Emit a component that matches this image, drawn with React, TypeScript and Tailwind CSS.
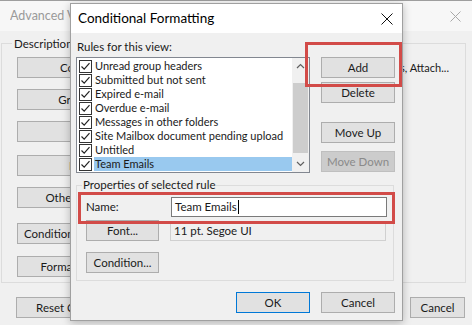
import React from "react";

const font = "font-['Lato','Segoe_UI',sans-serif]";

function Btn({ children, className = "", disabled = false }: { children: React.ReactNode; className?: string; disabled?: boolean }) {
  return (
    <div
      className={`h-[21px] shrink-0 flex items-center justify-center whitespace-nowrap border text-[11.5px] ${
        disabled ? "bg-[#cccccc] border-[#bfbfbf] text-[#8a8a8a]" : "bg-[#e1e1e1] border-[#adadad] text-[#1a1a1a]"
      } ${className}`}
    >
      {children}
    </div>
  );
}

function Check() {
  return (
    <span className="w-[13px] h-[13px] border border-[#333] bg-white flex items-center justify-center shrink-0">
      <svg width="11" height="11" viewBox="0 0 11 11">
        <path d="M1.5 5.5 L4.2 8.2 L9.5 2.2" fill="none" stroke="#222" strokeWidth="1.2" />
      </svg>
    </span>
  );
}

const rules = [
  "Unread group headers",
  "Submitted but not sent",
  "Expired e-mail",
  "Overdue e-mail",
  "Messages in other folders",
  "Site Mailbox document pending upload",
  "Untitled",
  "Team Emails",
];

export default function App() {
  return (
    <div className={`relative w-[472px] h-[325px] overflow-hidden bg-[#f0f0f0] ${font} text-[#1a1a1a]`}>
      {/* background window: Advanced View Settings */}
      <div className="h-[31px] bg-[#f7f7f7] border-t border-[#9e9e9e] flex items-center justify-between pl-[10px] pr-[11px]">
        <span className="w-[60px] overflow-hidden whitespace-nowrap text-[12.5px] text-[#9a9a9a]">Advanced View Settings</span>
        <svg width="11" height="11" viewBox="0 0 11 11">
          <path d="M0.5 0.5 L10.5 10.5 M10.5 0.5 L0.5 10.5" stroke="#a8a8a8" strokeWidth="1" />
        </svg>
      </div>
      <div className="relative mx-[1px] mt-[12px] h-[240px] w-[465px] border border-[#dcdcdc] flex">
        <span className="absolute -top-[9px] left-[10px] bg-[#f0f0f0] px-[2px] text-[11.5px]">Description</span>
        <div className="flex flex-col ml-[15px] pt-[13px] w-[53px] overflow-hidden">
          <Btn className="w-[138px]">Columns...</Btn>
          <Btn className="w-[138px] mt-[11px]">Group By...</Btn>
          <Btn className="w-[138px] mt-[11px]">Sort...</Btn>
          <Btn className="w-[138px] mt-[13px]">Filter...</Btn>
          <Btn className="w-[138px] mt-[11px]">Other Settings...</Btn>
          <Btn className="w-[138px] mt-[15px]">Conditional Formatting...</Btn>
          <Btn className="w-[138px] mt-[12px]">Format Columns...</Btn>
        </div>
        <div className="ml-auto mt-[16px] mr-[16px] w-[55px] h-[16px] overflow-hidden flex justify-end">
          <span className="whitespace-nowrap text-[11px]">Flag Status, Attach...</span>
        </div>
      </div>
      <div className="flex justify-between pl-[16px] pr-[7px] mt-[14px]">
        <div className="w-[54px] overflow-hidden">
          <Btn className="w-[138px]">Reset Current View</Btn>
        </div>
        <Btn className="w-[55px]">Cancel</Btn>
      </div>

      {/* front dialog: Conditional Formatting */}
      <div className="absolute left-[70px] top-[3px] w-[333px] h-[318px] border border-[#a0a0a0] bg-[#f0f0f0] shadow-[0_2px_8px_rgba(0,0,0,0.25)] flex flex-col">
        <div className="h-[29px] bg-white flex items-center justify-between pl-[7px] pr-[9px]">
          <span className="text-[13.5px] text-black">Conditional Formatting</span>
          <svg width="12" height="12" viewBox="0 0 12 12">
            <path d="M0.5 0.5 L11.5 11.5 M11.5 0.5 L0.5 11.5" stroke="#111" strokeWidth="1" />
          </svg>
        </div>
        <div className="flex pl-[5px] pt-[6px]">
          <div className="w-[234px]">
            <div className="text-[11.5px] leading-[16px] pl-[1px]">Rules for this view:</div>
            <div className="mt-[2px] h-[116px] border border-[#828790] bg-white flex">
              <div className="flex-1 pt-[1px] pl-[2px]">
                {rules.map((r, i) => (
                  <div key={r} className="h-[14px] flex items-center">
                    <Check />
                    <span
                      className={`ml-[2px] h-[14px] flex items-center whitespace-nowrap text-[11px] leading-[14px] pl-[1px] ${
                        i === rules.length - 1 ? "bg-[#99c9ef] flex-1" : ""
                      }`}
                    >
                      {r}
                    </span>
                  </div>
                ))}
              </div>
              <div className="w-[17px] bg-[#f0f0f0] flex flex-col items-center">
                <svg width="17" height="17" viewBox="0 0 17 17">
                  <path d="M5 10 L8.5 6.5 L12 10" fill="none" stroke="#606060" strokeWidth="1.2" />
                </svg>
                <div className="w-[15px] h-[70px] mt-[8px] bg-[#cdcdcd]" />
                <div className="flex-1" />
                <svg width="17" height="17" viewBox="0 0 17 17">
                  <path d="M5 7 L8.5 10.5 L12 7" fill="none" stroke="#606060" strokeWidth="1.2" />
                </svg>
              </div>
            </div>
          </div>
          <div className="ml-[11px] pt-[18px] flex flex-col">
            <Btn className="w-[74px]">Add</Btn>
            <Btn className="w-[74px] mt-[4px]">Delete</Btn>
            <Btn className="w-[74px] mt-[19px]">Move Up</Btn>
            <Btn className="w-[74px] mt-[8px]" disabled>
              Move Down
            </Btn>
          </div>
        </div>

        {/* properties group */}
        <div className="relative ml-[5px] mt-[12px] w-[318px] h-[96px] border border-[#dcdcdc] pl-[9px] pt-[11px]">
          <span className="absolute -top-[9px] left-[5px] px-[1px] bg-[#f0f0f0] text-[11.5px] leading-[16px]">Properties of selected rule</span>
          <div className="flex items-center">
            <span className="w-[85px] text-[11.5px]">Name:</span>
            <div className="w-[216px] h-[20px] bg-white border border-[#7a7a7a] flex items-center pl-[3px] text-[11.5px]">
              Team Emails<span className="w-px h-[14px] bg-black ml-[1px]" />
            </div>
          </div>
          <div className="flex items-center mt-[3px]">
            <Btn className="w-[73px]">Font...</Btn>
            <div className="ml-[11px] w-[216px] h-[20px] border border-[#d0d0d0] flex items-center pl-[3px] text-[11.5px]">
              11 pt. Segoe UI
            </div>
          </div>
          <Btn className="w-[73px] mt-[11px]">Condition...</Btn>
        </div>

        <div className="flex justify-end gap-[11px] pr-[7px] mt-[11px]">
          <Btn className="w-[74px] !border-[#0078d7]">OK</Btn>
          <Btn className="w-[74px]">Cancel</Btn>
        </div>
      </div>

      {/* red highlight boxes */}
      <div className="absolute left-[305px] top-[42px] w-[97px] h-[45px] border-[3px] border-[#d24b48]" />
      <div className="absolute left-[78px] top-[192px] w-[317px] h-[32px] border-[3px] border-[#d24b48]" />
    </div>
  );
}
